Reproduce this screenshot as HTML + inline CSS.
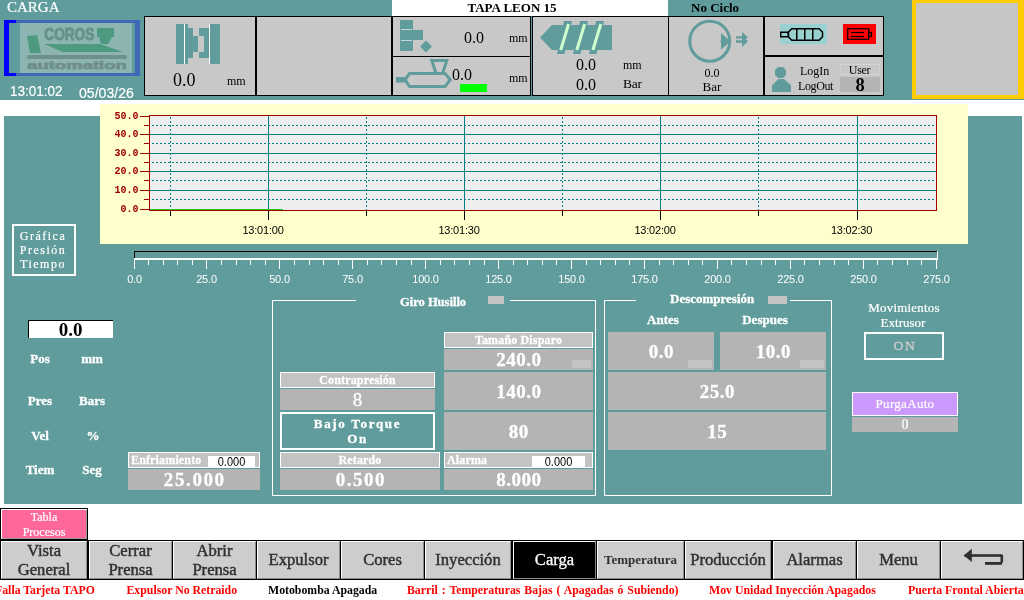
<!DOCTYPE html>
<html><head><meta charset="utf-8"><title>CARGA</title>
<style>
html,body{margin:0;padding:0;background:#fff;}
body{will-change:transform;width:1024px;height:600px;position:relative;overflow:hidden;font-family:"Liberation Serif",serif;color:#000;}
.a{position:absolute;box-sizing:border-box;}
.t{position:absolute;white-space:nowrap;line-height:1;}
.c{text-align:center;}
.w{color:#fff;-webkit-text-stroke:0.200px #fff;}
.b{font-weight:bold;}
.sans{font-family:"Liberation Sans",sans-serif;}
.pan{position:absolute;box-sizing:border-box;background:#c8c8c8;border:1px solid #000;}
.lab{position:absolute;box-sizing:border-box;background:#c3c3c3;border:1px solid #fff;color:#fff;font-weight:bold;font-size:12px;line-height:14px;letter-spacing:0.150px;text-align:center;white-space:nowrap;}
.val{position:absolute;box-sizing:border-box;background:#b4b4b4;color:#fff;font-weight:bold;font-size:19px;text-align:center;white-space:nowrap;letter-spacing:0.500px;padding-left:0.500px;}
.ind{position:absolute;background:#c3c3c3;}
.nb{position:absolute;box-sizing:border-box;top:540px;height:40px;background:#cdcdcd;border:1px solid #000;color:#303030;font-size:16.600px;-webkit-text-stroke:0.450px #303030;text-align:center;line-height:19px;white-space:nowrap;}
.nb:before{content:"";position:absolute;left:0;top:0;right:0;bottom:0;border-top:1px solid #fff;border-left:1px solid #fff;border-right:1px solid #8c8c8c;border-bottom:1px solid #8c8c8c;}
.lab,.val,.b.w{-webkit-text-stroke:0.300px #fff;}
.al{position:absolute;top:583.500px;font-size:11.800px;font-weight:bold;color:#f00;white-space:nowrap;line-height:12px;}
</style></head><body>
<!-- header background -->
<div class="a" style="left:0;top:0;width:1024px;height:100px;background:#619c9c"></div>
<!-- main panel -->
<div class="a" style="left:4px;top:116px;width:1018px;height:388px;background:#619c9c"></div>

<!-- HEADER -->
<div id="hdr">
<div class="t w" style="left:7px;top:0px;font-size:15px">CARGA</div>
<!-- logo -->
<div class="a" style="left:4px;top:20px;width:136px;height:56px;background:#4068b8"></div>
<div class="a" style="left:4px;top:20px;width:12px;height:56px;background:#0000ff"></div>
<div class="a" style="left:9px;top:23px;width:126px;height:50px;background:#619c9c"></div>
<div class="a" style="left:20px;top:23px;width:112px;height:50px;background:#8cb4b0"></div>
<svg class="a" style="left:20px;top:23px" width="112" height="50" viewBox="0 0 112 50">
<polygon points="7,13 17,12 21,30 10,30" fill="#4d9a80"/>
<polygon points="24,21 80,21 103,29 43,29" fill="#4d9a80"/>
<rect x="77" y="5" width="17" height="9" fill="#4d9a80"/>
<polygon points="79,14 92,14 88,21 81,21" fill="#4d9a80"/>
<rect x="7" y="32" width="100" height="4" rx="2" fill="#6f8f8c"/>
<text x="24.300" y="17.300" font-family="Liberation Sans, sans-serif" font-weight="bold" font-size="16.500" fill="#66908c" stroke="#66908c" stroke-width="0.900" textLength="50" lengthAdjust="spacingAndGlyphs">COROS</text>
<text x="7.300" y="45.500" font-family="Liberation Sans, sans-serif" font-weight="bold" font-size="10.500" fill="#6f8f8c" stroke="#6f8f8c" stroke-width="0.700" textLength="99.500" lengthAdjust="spacingAndGlyphs">automation</text>
</svg>
<div class="t w sans" style="left:9.500px;top:82.500px;font-size:15px;transform:scaleX(0.9);transform-origin:0 0">13:01:02</div>
<div class="t w sans" style="left:78.500px;top:84.500px;font-size:15px;transform:scaleX(0.94);transform-origin:0 0">05/03/26</div>

<!-- panels -->
<svg class="a" style="left:0;top:0" width="1024" height="100" viewBox="0 0 1024 100" shape-rendering="crispEdges">
<rect x="144" y="16" width="740" height="80" fill="#c8c8c8"/>
<g fill="#000">
<rect x="144" y="16" width="740" height="1"/>
<rect x="144" y="95" width="740" height="1"/>
<rect x="144" y="16" width="1" height="80"/>
<rect x="255" y="16" width="2" height="80"/>
<rect x="391" y="16" width="2" height="80"/>
<rect x="530" y="16" width="1" height="80"/>
<rect x="532" y="16" width="1" height="80"/>
<rect x="668" y="16" width="1" height="80"/>
<rect x="763" y="16" width="2" height="80"/>
<rect x="883" y="16" width="1" height="80"/>
<rect x="392" y="56" width="139" height="1"/>
<rect x="764" y="55" width="120" height="2"/>
</g>
<rect x="531" y="16" width="1" height="80" fill="#619c9c"/>
</svg>
<!-- title -->
<div class="a" style="left:392px;top:0;width:276px;height:16px;background:#fff"></div>
<div class="t b c" style="left:392px;top:1px;width:240px;font-size:13px">TAPA LEON 15</div>
<div class="t b" style="left:691px;top:1px;font-size:13px">No Ciclo</div>

<!-- yellow box -->
<div class="a" style="left:912px;top:0;width:112px;height:99px;background:#c6c6c6;border:solid #ffcc00;border-width:3px 6px 4px 4px"></div>
</div>
<!-- header icons -->
<svg class="a" style="left:0;top:0" width="1024" height="100" viewBox="0 0 1024 100">
<g fill="#619c9c">
<!-- mold icon -->
<rect x="176" y="24" width="8" height="40"/>
<rect x="185" y="24" width="3" height="40"/>
<polygon points="188,28 193,28 193,36 198,36 198,52 193,52 193,58 188,58"/>
<polygon points="199,28 209,28 209,58 199,58 199,52 204,52 204,36 199,36"/>
<rect x="210" y="24" width="2" height="40"/>
<rect x="212" y="24" width="8" height="40"/>
<!-- ejector icon -->
<rect x="400" y="20" width="13" height="31"/>
<rect x="400" y="30" width="23" height="10"/>
<polygon points="426,40.500 432,46.500 426,52.500 420,46.500"/>
<!-- screw -->
<polygon points="540,37.5 552,25 612,25 612,50 552,50"/>
<polygon points="564,21 572,21 564.5,54 557,54"/>
<polygon points="580,21 588,21 580.5,54 573,54"/>
<polygon points="596,21 604,21 596.5,54 589,54"/>
<!-- person -->
<polygon points="778,67 783,67 786,70 786,75 783,78 778,78 775,75 775,70"/>
<polygon points="778.300,79 784,79 791,85.200 791,92 772,92 772,85.200"/>
<!-- arrow -->
<polygon points="742,32 748,37.300 745.700,39.300 748,41.300 742,47"/>
<rect x="736" y="36.250" width="6.500" height="2.250"/>
<rect x="736" y="40.250" width="6.500" height="2.500"/>
<polygon points="721,33 730.500,41.250 721,49.750"/>
<rect x="720" y="40.750" width="2" height="1"/>
</g>
<rect x="401" y="29" width="11" height="1" fill="#c8d8d8"/>
<rect x="401" y="40" width="11" height="1" fill="#c8d8d8"/>
<rect x="184" y="24" width="1" height="40" fill="#fff"/>
<rect x="209" y="24" width="1" height="40" fill="#fff"/>
<g stroke="#ccffcc" stroke-width="3" fill="none">
<line x1="568.600" y1="24" x2="560.700" y2="50"/>
<line x1="584.700" y1="24" x2="576.800" y2="50"/>
<line x1="600.800" y1="24" x2="592.900" y2="50"/>
</g>
<circle cx="709.750" cy="41.200" r="20" fill="none" stroke="#619c9c" stroke-width="3"/>
<!-- extruder -->
<g fill="none" stroke="#619c9c" stroke-width="3">
<polygon points="405,79.700 409.500,73.500 445,73.500 450.300,79.700 445,86.500 409.500,86.500"/>
<polyline points="436,73.500 431.800,60.500 446.800,60.500 442.600,73.500"/>
</g>
<rect x="396" y="77" width="9" height="5.500" fill="#619c9c"/>
<rect x="460" y="84" width="27" height="8" fill="#00ff00"/>
<!-- heater -->
<rect x="780" y="24" width="47" height="20" fill="#99d0d0"/>
<g fill="none" stroke="#000" stroke-width="1.500">
<rect x="780.750" y="32.250" width="7.500" height="4.500"/>
<polygon points="788.500,32 791.700,28.750 819.100,28.750 822.500,32 822.500,36.800 819.100,40.250 791.700,40.250 788.500,36.800"/>
<line x1="796.750" y1="28.500" x2="796.750" y2="40.500"/>
<line x1="804.750" y1="28.500" x2="804.750" y2="40.500"/>
<line x1="812.750" y1="28.500" x2="812.750" y2="40.500"/>
</g>
<rect x="843" y="24" width="33" height="20" fill="#ff0000"/>
<g fill="none" stroke="#000" stroke-width="1.200">
<rect x="847.750" y="28.750" width="21" height="10.500"/>
<rect x="868.750" y="32.400" width="2.700" height="4.100"/>
<line x1="851" y1="32.500" x2="864" y2="32.500"/>
<line x1="851" y1="36.500" x2="864" y2="36.500"/>
</g>
</svg>
<!-- header text -->
<div class="t" style="left:173px;top:71px;font-size:18px">0.0</div>
<div class="t" style="left:227px;top:75px;font-size:12px">mm</div>
<div class="t" style="left:464px;top:30px;font-size:16px">0.0</div>
<div class="t" style="left:509px;top:32px;font-size:12px">mm</div>
<div class="t" style="left:452px;top:67px;font-size:16px">0.0</div>
<div class="t" style="left:509px;top:72px;font-size:12px">mm</div>
<div class="t" style="left:576px;top:57px;font-size:16px">0.0</div>
<div class="t" style="left:623px;top:59px;font-size:12px">mm</div>
<div class="t" style="left:576px;top:77px;font-size:16px">0.0</div>
<div class="t" style="left:623px;top:77px;font-size:13.500px;letter-spacing:-0.300px">Bar</div>
<div class="t c" style="left:692px;top:67px;width:40px;font-size:12px">0.0</div>
<div class="t c" style="left:692px;top:80px;width:40px;font-size:13px">Bar</div>
<div class="t" style="left:800px;top:65px;font-size:12px">LogIn</div>
<div class="t" style="left:798px;top:80px;font-size:12px;letter-spacing:-0.400px">LogOut</div>
<div class="a" style="left:840px;top:64px;width:40px;height:11px;background:#c8c8c8;border:1px solid #d4d4d4"></div>
<div class="t c" style="left:839.500px;top:64px;width:40px;font-size:12px;letter-spacing:-0.300px">User</div>
<div class="a" style="left:840px;top:77px;width:40px;height:15px;background:#b4b4b4"></div>
<div class="t c b" style="left:840px;top:75.700px;width:40px;font-size:18.500px">8</div>
<!-- chart -->
<div class="a" style="left:100px;top:104px;width:868px;height:140px;background:#ffffcc"></div>
<svg class="a" style="left:0;top:100px" width="1024" height="200" viewBox="0 100 1024 200" shape-rendering="crispEdges">
<rect x="150" y="116" width="786" height="94" fill="#eeeeee"/>
<g fill="#008080">
<rect x="150" y="134" width="786" height="1"/>
<rect x="150" y="153" width="786" height="1"/>
<rect x="150" y="171" width="786" height="1"/>
<rect x="150" y="190" width="786" height="1"/>
<rect x="268" y="116" width="1" height="94"/>
<rect x="464" y="116" width="1" height="94"/>
<rect x="660" y="116" width="1" height="94"/>
<rect x="857" y="116" width="1" height="94"/>
</g>
<g stroke="#008080" stroke-width="1" stroke-dasharray="2,2">
<line x1="152" y1="125.5" x2="936" y2="125.5"/>
<line x1="152" y1="143.5" x2="936" y2="143.5"/>
<line x1="152" y1="162.5" x2="936" y2="162.5"/>
<line x1="152" y1="180.5" x2="936" y2="180.5"/>
<line x1="152" y1="199.5" x2="936" y2="199.5"/>
<line x1="170.5" y1="117" x2="170.5" y2="210"/>
<line x1="366.5" y1="117" x2="366.5" y2="210"/>
<line x1="562.5" y1="117" x2="562.5" y2="210"/>
<line x1="758.5" y1="117" x2="758.5" y2="210"/>
</g>
<rect x="149.500" y="115.500" width="787" height="95" fill="none" stroke="#a00000"/>
<g fill="#a00000">
<rect x="140" y="116" width="9" height="1"/>
<rect x="140" y="134" width="9" height="1"/>
<rect x="140" y="153" width="9" height="1"/>
<rect x="140" y="171" width="9" height="1"/>
<rect x="140" y="190" width="9" height="1"/>
<rect x="140" y="209" width="9" height="1"/>
<rect x="144" y="125" width="5" height="1"/>
<rect x="144" y="143" width="5" height="1"/>
<rect x="144" y="162" width="5" height="1"/>
<rect x="144" y="180" width="5" height="1"/>
<rect x="144" y="199" width="5" height="1"/>
</g>
<g fill="#000">
<rect x="268" y="211" width="1" height="9"/>
<rect x="464" y="211" width="1" height="9"/>
<rect x="660" y="211" width="1" height="9"/>
<rect x="857" y="211" width="1" height="9"/>
<rect x="170" y="211" width="1" height="5"/>
<rect x="366" y="211" width="1" height="5"/>
<rect x="562" y="211" width="1" height="5"/>
<rect x="758" y="211" width="1" height="5"/>
</g>
<rect x="150" y="209" width="133" height="1" fill="#22cc22"/>
<g font-family="Liberation Mono, monospace" font-weight="bold" font-size="10" fill="#a00000" text-anchor="end">
<text x="138.500" y="118.5">50.0</text>
<text x="138.500" y="136.5">40.0</text>
<text x="138.500" y="155.5">30.0</text>
<text x="138.500" y="173.5">20.0</text>
<text x="138.500" y="192.5">10.0</text>
<text x="138.500" y="211.5">0.0</text>
</g>
<g font-family="Liberation Sans, sans-serif" font-size="11" fill="#000" text-anchor="middle" letter-spacing="-0.2">
<text x="263" y="234">13:01:00</text>
<text x="459" y="234">13:01:30</text>
<text x="655" y="234">13:02:00</text>
<text x="851.5" y="234">13:02:30</text>
</g>
<rect x="134" y="251" width="803" height="1" fill="#000"/>
<rect x="134" y="251" width="1" height="7" fill="#000"/>
<rect x="134" y="258" width="804" height="2" fill="#fff"/>
<rect x="937" y="251" width="1" height="9" fill="#fff"/>
<g fill="#fff">
<rect x="134" y="260" width="1" height="9"/>
<rect x="148" y="260" width="1" height="5"/>
<rect x="163" y="260" width="1" height="5"/>
<rect x="177" y="260" width="1" height="5"/>
<rect x="192" y="260" width="1" height="5"/>
<rect x="206" y="260" width="1" height="9"/>
<rect x="221" y="260" width="1" height="5"/>
<rect x="236" y="260" width="1" height="5"/>
<rect x="250" y="260" width="1" height="5"/>
<rect x="265" y="260" width="1" height="5"/>
<rect x="279" y="260" width="1" height="9"/>
<rect x="294" y="260" width="1" height="5"/>
<rect x="309" y="260" width="1" height="5"/>
<rect x="323" y="260" width="1" height="5"/>
<rect x="338" y="260" width="1" height="5"/>
<rect x="352" y="260" width="1" height="9"/>
<rect x="367" y="260" width="1" height="5"/>
<rect x="381" y="260" width="1" height="5"/>
<rect x="396" y="260" width="1" height="5"/>
<rect x="411" y="260" width="1" height="5"/>
<rect x="425" y="260" width="1" height="9"/>
<rect x="440" y="260" width="1" height="5"/>
<rect x="454" y="260" width="1" height="5"/>
<rect x="469" y="260" width="1" height="5"/>
<rect x="484" y="260" width="1" height="5"/>
<rect x="498" y="260" width="1" height="9"/>
<rect x="513" y="260" width="1" height="5"/>
<rect x="527" y="260" width="1" height="5"/>
<rect x="542" y="260" width="1" height="5"/>
<rect x="556" y="260" width="1" height="5"/>
<rect x="571" y="260" width="1" height="9"/>
<rect x="586" y="260" width="1" height="5"/>
<rect x="600" y="260" width="1" height="5"/>
<rect x="615" y="260" width="1" height="5"/>
<rect x="629" y="260" width="1" height="5"/>
<rect x="644" y="260" width="1" height="9"/>
<rect x="659" y="260" width="1" height="5"/>
<rect x="673" y="260" width="1" height="5"/>
<rect x="688" y="260" width="1" height="5"/>
<rect x="702" y="260" width="1" height="5"/>
<rect x="717" y="260" width="1" height="9"/>
<rect x="731" y="260" width="1" height="5"/>
<rect x="746" y="260" width="1" height="5"/>
<rect x="761" y="260" width="1" height="5"/>
<rect x="775" y="260" width="1" height="5"/>
<rect x="790" y="260" width="1" height="9"/>
<rect x="804" y="260" width="1" height="5"/>
<rect x="819" y="260" width="1" height="5"/>
<rect x="834" y="260" width="1" height="5"/>
<rect x="848" y="260" width="1" height="5"/>
<rect x="863" y="260" width="1" height="9"/>
<rect x="877" y="260" width="1" height="5"/>
<rect x="892" y="260" width="1" height="5"/>
<rect x="907" y="260" width="1" height="5"/>
<rect x="921" y="260" width="1" height="5"/>
<rect x="936" y="260" width="1" height="9"/>
</g>
<g font-family="Liberation Sans, sans-serif" font-size="11" fill="#fff" text-anchor="middle" letter-spacing="-0.2">
<text x="134.5" y="283">0.0</text>
<text x="206.5" y="283">25.0</text>
<text x="279.5" y="283">50.0</text>
<text x="352.5" y="283">75.0</text>
<text x="425.5" y="283">100.0</text>
<text x="498.5" y="283">125.0</text>
<text x="571.5" y="283">150.0</text>
<text x="644.5" y="283">175.0</text>
<text x="717.5" y="283">200.0</text>
<text x="790.5" y="283">225.0</text>
<text x="863.5" y="283">250.0</text>
<text x="936.5" y="283">275.0</text>
</g>
</svg>
<!-- main panel content -->
<div class="a w" style="left:12px;top:224px;width:64px;height:52px;border:2px solid #fff;font-size:12px;line-height:14px;letter-spacing:1.500px;padding:3px 2px 0 0;text-align:center;white-space:nowrap">Gráfica<br>Presión<br>Tiempo</div>

<div class="a" style="left:28px;top:320px;width:85px;height:18px;background:#fff;border-top:1px solid #000;border-left:1px solid #000"></div>
<div class="t b c" style="left:28px;top:320px;width:85px;font-size:19px">0.0</div>
<div class="t b w c" style="left:10px;top:352px;width:60px;font-size:13px">Pos</div>
<div class="t b w c" style="left:62px;top:352px;width:60px;font-size:13px">mm</div>
<div class="t b w c" style="left:10px;top:394px;width:60px;font-size:13px">Pres</div>
<div class="t b w c" style="left:62px;top:394px;width:60px;font-size:13px">Bars</div>
<div class="t b w c" style="left:10px;top:429px;width:60px;font-size:13px">Vel</div>
<div class="t b w c" style="left:63px;top:429px;width:60px;font-size:13px">%</div>
<div class="t b w c" style="left:10px;top:463px;width:60px;font-size:13px">Tiem</div>
<div class="t b w c" style="left:62px;top:463px;width:60px;font-size:13px">Seg</div>

<div class="lab" style="left:128px;top:452px;width:132px;height:16px;text-align:left;padding-left:2px">Enfriamiento</div>
<div class="a sans c" style="left:208px;top:456px;width:47px;height:11px;background:#fff;font-size:11px;line-height:11px"><span style="display:inline-block;position:relative;top:1.200px;transform:scaleY(1.18);transform-origin:50% 60%">0.000</span></div>
<div class="val" style="left:128px;top:469px;width:132px;height:21px;line-height:21px;letter-spacing:1.600px;padding-left:1.600px">25.000</div>

<!-- Giro Husillo frame -->
<div class="a" style="left:272px;top:300px;width:324px;height:196px;border:1px solid #fff;"></div>
<div class="a" style="left:356px;top:300px;width:154px;height:1px;background:#619c9c"></div>
<div class="t b w" style="left:400px;top:296px;font-size:12.500px">Giro Husillo</div>
<div class="ind" style="left:488px;top:296px;width:16px;height:8px"></div>

<div class="lab" style="left:444px;top:332px;width:149px;height:16px">Tamaño Disparo</div>
<div class="val" style="left:444px;top:349px;width:149px;height:21px;line-height:21px">240.0</div>
<div class="ind" style="left:572px;top:360px;width:19px;height:8px"></div>
<div class="val" style="left:444px;top:372px;width:149px;height:38px;line-height:39px">140.0</div>
<div class="val" style="left:444px;top:412px;width:149px;height:38px;line-height:39px">80</div>
<div class="lab" style="left:444px;top:452px;width:149px;height:16px;text-align:left;padding-left:2px">Alarma</div>
<div class="a sans c" style="left:532px;top:456px;width:53px;height:11px;background:#fff;font-size:11px;line-height:11px"><span style="display:inline-block;position:relative;top:1.200px;transform:scaleY(1.18);transform-origin:50% 60%">0.000</span></div>
<div class="val" style="left:444px;top:469px;width:149px;height:21px;line-height:21px">8.000</div>

<div class="lab" style="left:280px;top:372px;width:155px;height:16px">Contrapresión</div>
<div class="val" style="left:280px;top:389px;width:155px;height:21px;line-height:21px;font-weight:normal;-webkit-text-stroke:0.300px #fff">8</div>
<div class="a w b c" style="left:280px;top:412px;width:155px;height:38px;border:2px solid #fff;font-size:13px;line-height:15px;letter-spacing:1.700px;padding-top:2px;white-space:nowrap">Bajo Torque<br>On</div>
<div class="lab" style="left:280px;top:452px;width:160px;height:16px">Retardo</div>
<div class="val" style="left:280px;top:469px;width:160px;height:21px;line-height:21px;letter-spacing:1.500px;padding-left:1.500px">0.500</div>

<!-- Descompresion frame -->
<div class="a" style="left:604px;top:300px;width:228px;height:196px;border:1px solid #fff;"></div>
<div class="a" style="left:636px;top:300px;width:154px;height:1px;background:#619c9c"></div>
<div class="t b w" style="left:670px;top:292px;font-size:13px">Descompresión</div>
<div class="ind" style="left:768px;top:296px;width:19px;height:8px"></div>
<div class="t b w c" style="left:633px;top:313px;width:60px;font-size:13px">Antes</div>
<div class="t b w c" style="left:735px;top:313px;width:60px;font-size:13px">Despues</div>
<div class="val" style="left:608px;top:332px;width:106px;height:38px;line-height:39px">0.0</div>
<div class="ind" style="left:688px;top:360px;width:24px;height:8px"></div>
<div class="val" style="left:720px;top:332px;width:106px;height:38px;line-height:39px">10.0</div>
<div class="ind" style="left:800px;top:360px;width:24px;height:8px"></div>
<div class="val" style="left:608px;top:372px;width:218px;height:38px;line-height:39px">25.0</div>
<div class="val" style="left:608px;top:412px;width:218px;height:38px;line-height:39px">15</div>

<!-- right -->
<div class="t w c" style="left:854px;top:301px;width:100px;font-size:13px;letter-spacing:0.200px">Movimientos</div>
<div class="t w c" style="left:853px;top:316px;width:100px;font-size:13px;letter-spacing:0px">Extrusor</div>
<div class="a c" style="left:864px;top:332px;width:80px;height:28px;border:2px solid #fff;color:#cdcdcd;-webkit-text-stroke:0.300px #cdcdcd;font-size:13.500px;line-height:23px;letter-spacing:1.800px;padding-left:2px">ON</div>
<div class="a w c" style="left:852px;top:392px;width:106px;height:24px;background:#cc99ff;border:1px solid #fff;font-size:13px;line-height:22px;letter-spacing:0.300px">PurgaAuto</div>
<div class="a w c" style="left:852px;top:417px;width:106px;height:15px;background:#b4b4b4;font-size:14px;line-height:15px">0</div>

<!-- Tabla procesos -->
<div class="a w c" style="left:0;top:508px;width:88px;height:32px;background:#ff6699;border:1px solid #000;box-shadow:inset 1px 1px 0 #fff,inset -1px -1px 0 #999;font-size:12px;line-height:15px;padding-top:1px">Tabla<br>Procesos</div>

<!-- nav -->
<div class="nb" style="left:0px;width:88px"><span class="t c" style="left:0;width:100%;top:-0.500px;line-height:19px">Vista<br>General</span></div>
<div class="nb" style="left:88px;width:85px"><span class="t c" style="left:0;width:100%;top:-0.500px;line-height:19px">Cerrar<br>Prensa</span></div>
<div class="nb" style="left:172px;width:85px"><span class="t c" style="left:0;width:100%;top:-0.500px;line-height:19px">Abrir<br>Prensa</span></div>
<div class="nb" style="left:256px;width:85px;line-height:38px">Expulsor</div>
<div class="nb" style="left:340px;width:85px;line-height:38px">Cores</div>
<div class="nb" style="left:424px;width:88px;line-height:38px">Inyección</div>
<div class="nb" style="left:512px;width:85px;line-height:38px;background:#000;color:#fff;-webkit-text-stroke:0.300px #fff">Carga</div>
<div class="nb" style="left:596px;width:89px;line-height:38px;font-size:13px;font-weight:bold;-webkit-text-stroke:0">Temperatura</div>
<div class="nb" style="left:684px;width:88px;line-height:38px">Producción</div>
<div class="nb" style="left:772px;width:85px;line-height:38px">Alarmas</div>
<div class="nb" style="left:856px;width:85px;line-height:38px">Menu</div>
<div class="nb" style="left:940px;width:84px"></div>
<svg class="a" style="left:940px;top:540px" width="83" height="40" viewBox="0 0 83 40">
<g fill="#303030"><polygon points="23.800,15.400 31.800,8.800 31.800,22"/>
<rect x="24.500" y="14.200" width="37.200" height="2.600"/>
<rect x="60.500" y="15" width="2.600" height="7.600"/>
<rect x="45" y="22" width="17" height="2.800"/>
<rect x="60.500" y="14.600" width="2" height="2"/></g>
</svg>

<!-- alarms -->
<div class="al" style="left:-5px">Falla Tarjeta TAPO</div>
<div class="al" style="left:126.500px">Expulsor No Retraido</div>
<div class="al" style="left:268px;color:#000">Motobomba Apagada</div>
<div class="al" style="left:407px;word-spacing:1px">Barril : Temperaturas Bajas ( Apagadas ó Subiendo)</div>
<div class="al" style="left:709px">Mov Unidad Inyección Apagados</div>
<div class="al" style="left:908px">Puerta Frontal Abierta</div>
</body></html>
